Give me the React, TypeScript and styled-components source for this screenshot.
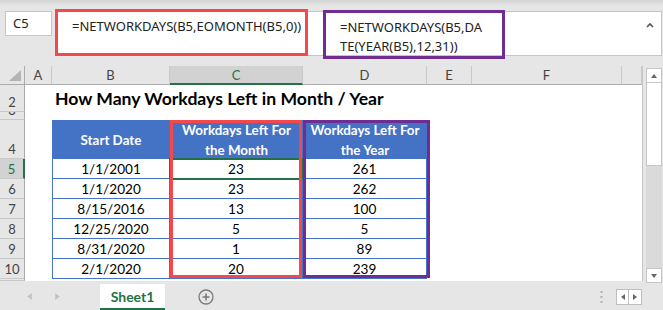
import styled, { createGlobalStyle } from 'styled-components';

const GlobalStyle = createGlobalStyle`
  html, body { margin: 0; padding: 0; }
  body {
    width: 663px;
    height: 310px;
    overflow: hidden;
    background: #e6e6e6;
    font-family: Lato, "Liberation Sans", sans-serif;
  }
`;

const COLS = [25, 27, 118, 133, 124, 45, 150, 20];
const ROWS = [19, 27, 8, 39, 20, 20, 20, 20, 20, 20, 2];
const LETTERS = ['A', 'B', 'C', 'D', 'E', 'F', ''];

const GREEN = '#217346';
const BLUE = '#4472c4';

const data = [
  ['1/1/2001', '23', '261'],
  ['1/1/2020', '23', '262'],
  ['8/15/2016', '13', '100'],
  ['12/25/2020', '5', '5'],
  ['8/31/2020', '1', '89'],
  ['2/1/2020', '20', '239'],
];

const Window = styled.div`
  width: 663px;
  height: 310px;
  display: flex;
  flex-direction: column;
  background: linear-gradient(#d4d4d4 0px, #e6e6e6 6px);
`;

/* ---------- formula bar ---------- */

const TopBar = styled.div`
  height: 67px;
  box-sizing: border-box;
  padding: 9px 1px 0 5px;
  display: flex;
  align-items: flex-start;
`;

const NameBox = styled.div`
  margin-top: 2px;
  width: 47px;
  height: 25px;
  box-sizing: border-box;
  background: #fff;
  border: 1px solid #c6c6c6;
  padding-left: 7px;
  font: 13px "Noto Sans", sans-serif;
  color: #222;
  line-height: 23px;
`;

const FormulaArea = styled.div`
  margin: 2px 0 0 3px;
  flex: 1;
  height: 45px;
  box-sizing: border-box;
  background: #fff;
  border: 1px solid #c6c6c6;
  display: flex;
  align-items: flex-start;
`;

const Annot = styled.div<{ $color: string }>`
  box-sizing: border-box;
  border: 3px solid ${p => p.$color};
  font: 13px "Noto Sans", sans-serif;
  color: #222;
  line-height: 19px;
  white-space: pre;
`;

const RedFormula = styled(Annot)`
  margin: -3px 0 0 -1px;
  width: 253px;
  height: 47px;
  padding: 5px 0 0 14px;
`;

const PurpleFormula = styled(Annot)`
  margin: -2px 0 0 15px;
  width: 182px;
  height: 49px;
  padding: 5px 0 0 14px;
`;

const Caret = styled.svg`
  margin: 10px 7px 0 auto;
`;

/* ---------- sheet ---------- */

const SheetRow = styled.div`
  display: flex;
  align-items: flex-start;
`;

const Grid = styled.div`
  display: grid;
  grid-template-columns: ${COLS.map(c => `${c}px`).join(' ')};
  grid-template-rows: ${ROWS.map(r => `${r}px`).join(' ')};
  background: #fff;
  overflow: hidden;
  border-right: 1px solid #c6c6c6;
`;

const Cell = styled.div<{ $r: number; $c: number }>`
  grid-row: ${p => p.$r};
  grid-column: ${p => p.$c};
  min-width: 0;
  box-sizing: border-box;
`;

const Corner = styled(Cell)`
  background: #e6e6e6;
  border-right: 1px solid #ababab;
  border-bottom: 1px solid #ababab;
  display: flex;
  align-items: flex-end;
  justify-content: flex-end;
  padding: 0 3px 3px 0;
`;

const ColHead = styled(Cell)<{ $active?: boolean }>`
  background: ${p => (p.$active ? '#d2d2d2' : '#e6e6e6')};
  color: ${p => (p.$active ? GREEN : '#444')};
  border-right: 1px solid #c9c9c9;
  border-bottom: ${p => (p.$active ? `2px solid ${GREEN}` : '1px solid #ababab')};
  font-size: 13px;
  display: flex;
  align-items: center;
  justify-content: center;
`;

const RowHead = styled(Cell)<{ $active?: boolean }>`
  background: ${p => (p.$active ? '#d2d2d2' : '#e6e6e6')};
  color: ${p => (p.$active ? GREEN : '#444')};
  border-right: ${p => (p.$active ? `2px solid ${GREEN}` : '1px solid #ababab')};
  border-bottom: 1px solid #c9c9c9;
  font-size: 13px;
  line-height: 16px;
  display: flex;
  align-items: flex-end;
  justify-content: center;
  padding-bottom: 1px;
  overflow: hidden;
`;

const Title = styled(Cell)`
  font-weight: 700;
  font-size: 17.6px;
  color: #000;
  white-space: nowrap;
  display: flex;
  align-items: flex-end;
  padding: 0 0 3px 3px;
`;

const HeadCell = styled(Cell)`
  background: ${BLUE};
  color: #fff;
  font-weight: 700;
  font-size: 13.4px;
  line-height: 20px;
  text-align: center;
  display: flex;
  align-items: center;
  justify-content: center;
  padding: 1px 4px 0;
`;

const DataCell = styled(Cell)<{ $first?: boolean; $selected?: boolean }>`
  position: relative;
  border-bottom: 1px solid ${BLUE};
  border-right: 1px solid ${BLUE};
  border-left: ${p => (p.$first ? `1px solid ${BLUE}` : 'none')};
  font-size: 13.6px;
  color: #000;
  display: flex;
  align-items: flex-end;
  justify-content: center;
  line-height: 17px;

  &::after {
    content: '';
    display: ${p => (p.$selected ? 'block' : 'none')};
    position: absolute;
    left: -1px;
    right: -1px;
    top: -1px;
    bottom: -2px;
    border: 2px solid ${GREEN};
  }
`;

const Frame = styled.div<{ $color: string; $col: number; $extend: number }>`
  grid-row: 4 / 11;
  grid-column: ${p => p.$col};
  margin: 0 ${p => -p.$extend}px 1px 0;
  border: 3px solid ${p => p.$color};
  z-index: 3;
  pointer-events: none;
`;

const VScroll = styled.div`
  margin: 2px 0 0 3px;
  width: 16px;
  height: 215px;
  box-sizing: border-box;
  background: #dadada;
  display: flex;
  flex-direction: column;
`;

const ScrollBtn = styled.div`
  height: 15px;
  box-sizing: border-box;
  background: #fff;
  border: 1px solid #c6c6c6;
  display: flex;
  align-items: center;
  justify-content: center;
`;

const Thumb = styled.div`
  height: 83px;
  box-sizing: border-box;
  background: #fff;
  border: 1px solid #c6c6c6;
  border-top: none;
`;

const Track = styled.div`
  flex: 1;
`;

/* ---------- tabs ---------- */

const TabBar = styled.div`
  flex: 1;
  display: flex;
  align-items: stretch;
`;

const NavArrows = styled.div`
  width: 100px;
  display: flex;
  align-items: center;
  gap: 21px;
  padding-left: 26px;
  box-sizing: border-box;
`;

const SheetTab = styled.div`
  width: 65px;
  height: 26px;
  margin-top: 1px;
  box-sizing: border-box;
  background: #fff;
  border-bottom: 2px solid ${GREEN};
  color: ${GREEN};
  font-weight: 700;
  font-size: 14px;
  display: flex;
  align-items: center;
  justify-content: center;
`;

const AddSheet = styled.svg`
  align-self: center;
  margin-left: 33px;
`;

const Spacer = styled.div`
  flex: 1;
`;

const Dots = styled.svg`
  align-self: center;
  margin-right: 13px;
`;

const ScrollNav = styled.div`
  align-self: center;
  display: flex;
  margin-right: 21px;
`;

const NavBtn = styled.div`
  width: 13px;
  height: 16px;
  box-sizing: border-box;
  background: #fff;
  border: 1px solid #bdbdbd;
  display: flex;
  align-items: center;
  justify-content: center;
  & + & { border-left: none; }
`;

const Tri = ({ dir, color, size = 6 }: { dir: 'up' | 'down' | 'left' | 'right'; color: string; size?: number }) => {
  const pts = {
    up: '0,5 3,1 6,5',
    down: '0,1 3,5 6,1',
    left: '5,0 1,3 5,6',
    right: '1,0 5,3 1,6',
  }[dir];
  return (
    <svg width={size} height={size} viewBox="0 0 6 6">
      <polygon points={pts} fill={color} />
    </svg>
  );
};

export default function App() {
  return (
    <Window>
      <GlobalStyle />
      <TopBar>
        <NameBox>C5</NameBox>
        <FormulaArea>
          <RedFormula $color="#f5474c">=NETWORKDAYS(B5,EOMONTH(B5,0))</RedFormula>
          <PurpleFormula $color="#6f2c91">{'=NETWORKDAYS(B5,DA\nTE(YEAR(B5),12,31))'}</PurpleFormula>
          <Caret width="8" height="6" viewBox="0 0 8 6">
            <polyline points="1,5 4,2 7,5" fill="none" stroke="#555" strokeWidth="1.6" />
          </Caret>
        </FormulaArea>
      </TopBar>

      <SheetRow>
        <Grid>
          <Corner $r={1} $c={1}>
            <svg width="12" height="11" viewBox="0 0 12 11">
              <polygon points="12,0 12,11 0,11" fill="#b4b4b4" />
            </svg>
          </Corner>
          {LETTERS.map((l, i) => (
            <ColHead key={i} $r={1} $c={i + 2} $active={l === 'C'}>
              {l}
            </ColHead>
          ))}
          {[2, 3, 4, 5, 6, 7, 8, 9, 10, 11].map(n => (
            <RowHead key={n} $r={n} $c={1} $active={n === 5}>
              {n < 11 ? n : ''}
            </RowHead>
          ))}

          <Title $r={2} $c={3}>How Many Workdays Left in Month / Year</Title>

          <HeadCell $r={4} $c={3}>Start Date</HeadCell>
          <HeadCell $r={4} $c={4}>Workdays Left For the Month</HeadCell>
          <HeadCell $r={4} $c={5}>Workdays Left For the Year</HeadCell>

          {data.map((row, i) =>
            row.map((v, j) => (
              <DataCell
                key={`${i}-${j}`}
                $r={i + 5}
                $c={j + 3}
                $first={j === 0}
                $selected={i === 0 && j === 1}
              >
                {v}
              </DataCell>
            ))
          )}

          <Frame $color="#f5474c" $col={4} $extend={-1} />
          <Frame $color="#6f2c91" $col={5} $extend={3} />
        </Grid>

        <VScroll>
          <ScrollBtn>
            <Tri dir="up" color="#666" />
          </ScrollBtn>
          <Thumb />
          <Track />
          <ScrollBtn>
            <Tri dir="down" color="#666" />
          </ScrollBtn>
        </VScroll>
      </SheetRow>

      <TabBar>
        <NavArrows>
          <Tri dir="left" color="#c2c2c2" size={7} />
          <Tri dir="right" color="#c2c2c2" size={7} />
        </NavArrows>
        <SheetTab>Sheet1</SheetTab>
        <AddSheet width="16" height="16" viewBox="0 0 16 16">
          <circle cx="8" cy="8" r="7" fill="none" stroke="#7a7a7a" strokeWidth="1.3" />
          <path d="M8 4.5v7M4.5 8h7" stroke="#7a7a7a" strokeWidth="1.6" />
        </AddSheet>
        <Spacer />
        <Dots width="3" height="12" viewBox="0 0 3 12">
          <rect x="0.5" y="0" width="2" height="2" fill="#b0b0b0" />
          <rect x="0.5" y="5" width="2" height="2" fill="#b0b0b0" />
          <rect x="0.5" y="10" width="2" height="2" fill="#b0b0b0" />
        </Dots>
        <ScrollNav>
          <NavBtn>
            <Tri dir="left" color="#666" />
          </NavBtn>
          <NavBtn>
            <Tri dir="right" color="#666" />
          </NavBtn>
        </ScrollNav>
      </TabBar>
    </Window>
  );
}
